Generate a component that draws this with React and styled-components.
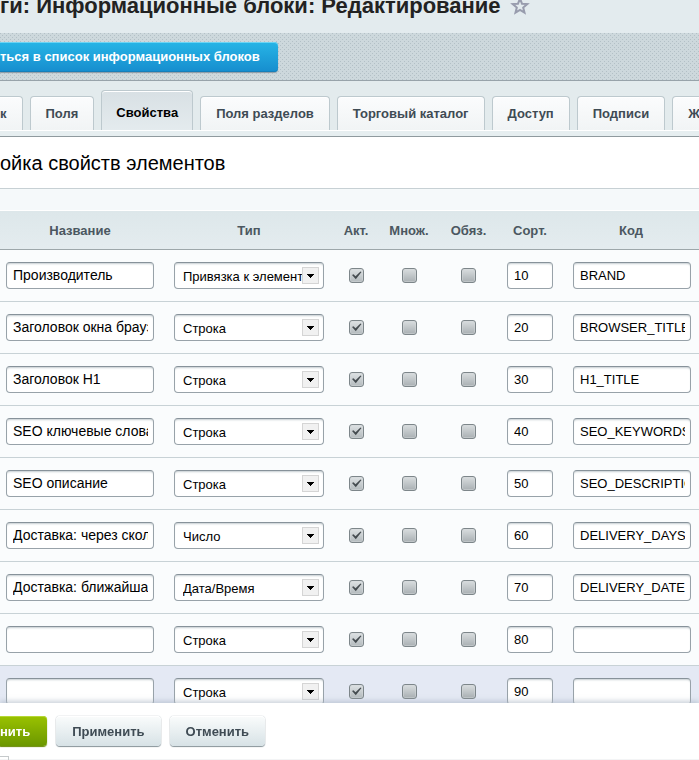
import React from "react";
import styled, { createGlobalStyle, css } from "styled-components";

const Global = createGlobalStyle`
  * { box-sizing: border-box; }
  body { margin: 0; font-family: "Liberation Sans", Arial, sans-serif; font-size: 13px; color: #000; background: #fff; }
  button, input, select { font: inherit; color: inherit; margin: 0; }
`;

const Page = styled.div`
  display: flex;
  flex-direction: column;
  height: 100vh;
  overflow: hidden;
`;

const TitleBar = styled.header`
  display: flex;
  align-items: center;
  gap: 10px;
  padding-bottom: 21px;
  background: #e3ebee;
  white-space: nowrap;
`;

const Title = styled.h1`
  margin: 0;
  font-size: 22px;
  line-height: 12px;
  color: #222;
`;

const StarButton = styled.button`
  display: flex;
  padding: 0;
  border: 0;
  background: none;
  height: 12px;
  align-items: center;
`;

const Toolbar = styled.div`
  display: flex;
  flex: none;
  height: 48px;
  padding-top: 9px;
  border-bottom: 1px solid #98a3aa;
  background-color: #cdd8dc;
  background-image: conic-gradient(from 270deg at 1px 1px, #b3c0c6 90deg, transparent 0),
    conic-gradient(from 270deg at 1px 1px, #b3c0c6 90deg, transparent 0);
  background-size: 4px 4px;
  background-position: 0 0, 2px 2px;
`;

const BackButton = styled.button`
  height: 30px;
  padding: 0 18px 2px 0;
  border: 0;
  border-radius: 0 4px 4px 0;
  background: linear-gradient(#27b5e6, #168dce);
  box-shadow: inset 0 1px #6dd5f5, inset 0 -1px #167fb9, 0 1px 1px #8b9aa3;
  color: #fff;
  font-weight: bold;
  white-space: nowrap;
`;

const Tabs = styled.div`
  display: flex;
  flex: none;
  align-items: flex-end;
  gap: 7px;
  height: 50px;
  overflow: hidden;
  background: #e3ebed;
  border-bottom: 1px solid #fff;
`;

const Tab = styled.button`
  flex: none;
  height: 34px;
  padding: 0 15px;
  border: 1px solid #bdc9ce;
  border-bottom: 0;
  border-radius: 4px 4px 0 0;
  background: linear-gradient(#fbfcfd, #f1f4f5);
  box-shadow: inset 0 1px #fff;
  color: #3f4b54;
  font-weight: bold;
  white-space: nowrap;
  ${(p) => p.$first && css`
    padding-left: 0;
    border-left: 0;
    border-top-left-radius: 0;
  `}
  ${(p) => p.$active && css`
    height: 40px;
    padding: 4px 14px 0;
    background: linear-gradient(#d8e0e4, #e4ebee);
    color: #000;
  `}
`;

const TabsBase = styled.div`
  flex: none;
  height: 6px;
  background: #e6eef0;
  border-bottom: 1px solid #8f9a9e;
`;

const SectionTitle = styled.h2`
  flex: none;
  margin: 0;
  padding: 15px 0 13px;
  border-bottom: 1px solid #c7d0d4;
  background: #fff;
  font-size: 20px;
  font-weight: normal;
  line-height: 23px;
  white-space: nowrap;
`;

const Content = styled.main`
  flex: 1;
  min-height: 0;
  padding-top: 21px;
  overflow: auto;
  scrollbar-width: none;
  background: #f5f9fa;
`;

const Table = styled.table`
  width: 100%;
  table-layout: fixed;
  border-collapse: separate;
  border-spacing: 0;
`;

const Col = styled.col`
  width: ${(p) => (p.$w ? `${p.$w}px` : "auto")};
`;

const HeadCell = styled.th`
  height: 40px;
  padding: 0;
  border-top: 1px solid #fff;
  border-bottom: 1px solid #9da7aa;
  background: linear-gradient(#dde7ea, #e4ecef);
  color: #4b5760;
  text-align: center;
  &:first-child { padding-right: 4px; }
`;

const Row = styled.tr`
  background: ${(p) => (p.$hover ? "#e4e9f4" : "#fafcfd")};
`;

const Cell = styled.td`
  height: 52px;
  padding: 0 ${(p) => p.$pr ?? 10}px 0 ${(p) => p.$pl ?? 10}px;
  border-bottom: 1px solid #c8d2d6;
  text-align: center;
  vertical-align: middle;
`;

const field = css`
  display: block;
  width: 100%;
  height: 27px;
  border: 1px solid #8f9aa1;
  border-color: #87929a #98a2a9 #98a2a9;
  border-radius: 4px;
  background: #fff;
  box-shadow: inset 0 2px 2px -1px #c5cdd1;
`;

const TextField = styled.input`
  ${field}
  padding: 0 5px 1px 6px;
  font-size: ${(p) => (p.$large ? 14 : 13)}px;
`;

const SelectBox = styled.div`
  display: grid;
  align-items: center;
  & > * { grid-area: 1 / 1; }
`;

const Select = styled.select`
  ${field}
  padding: 1px 21px 0 8px;
  appearance: none;
  text-overflow: clip;
`;

const Arrow = styled.svg`
  justify-self: end;
  margin-right: 5px;
  pointer-events: none;
`;

const Check = styled.input`
  display: block;
  width: 15px;
  height: 15px;
  margin: 0 auto;
  appearance: none;
  border: 1px solid #7d868a;
  border-radius: 3px;
  background: linear-gradient(#d9dddf, #a9b0b3);
  box-shadow: inset 0 0 0 1px #d3d8da80;
  &:checked {
    background: url("data:image/svg+xml,%3Csvg xmlns='http://www.w3.org/2000/svg' width='13' height='13'%3E%3Cpath d='M2 6l1.500-.8L5.500 7.300 10.500 2.500 11.500 3 5.800 10.300z' fill='%23454c50'/%3E%3C/svg%3E") center no-repeat,
      linear-gradient(#dee2e4, #b3babd);
  }
`;

const Footer = styled.footer`
  position: relative;
  display: flex;
  flex: none;
  align-items: flex-start;
  gap: 9px;
  height: 57px;
  padding-top: 13px;
  background: #fff;
  border-bottom: 1px solid #f3f4f5;
  box-shadow: 0 -2px 5px #a6b2c099;
`;

const FooterButton = styled.button`
  height: 30px;
  padding: 0 16px;
  border: 0;
  border-radius: 4px;
  background: linear-gradient(#fafcfc, #d7e2e6);
  box-shadow: inset 0 1px #fff, 0 0 1px #778790, 0 1px 1px #8a969c;
  color: #3f4b54;
  font-weight: bold;
  ${(p) => p.$primary && css`
    padding: 0 17px 0 0;
    border-radius: 0 4px 4px 0;
    background: linear-gradient(#9ac200, #6b9700);
    box-shadow: inset 0 1px #b6d835, 0 1px 1px #668800;
    color: #fff;
  `}
`;

const CornerBox = styled.span`
  position: absolute;
  left: 0;
  bottom: -1px;
  width: 9px;
  height: 4px;
  border-top: 1px solid #c5c9cb;
  border-right: 1px solid #c5c9cb;
`;

const tabs = ["к", "Поля", "Свойства", "Поля разделов", "Торговый каталог", "Доступ", "Подписи", "Журнал"];
const columns = ["Название", "Тип", "Акт.", "Множ.", "Обяз.", "Сорт.", "Код"];
const widths = [164, 170, 44, 62, 57, 66, null];
const types = ["Строка", "Число", "Дата/Время", "Привязка к элементам"];

const rows = [
  ["Производитель", "Привязка к элементам", 10, "BRAND"],
  ["Заголовок окна браузера", "Строка", 20, "BROWSER_TITLE"],
  ["Заголовок H1", "Строка", 30, "H1_TITLE"],
  ["SEO ключевые слова", "Строка", 40, "SEO_KEYWORDS"],
  ["SEO описание", "Строка", 50, "SEO_DESCRIPTION"],
  ["Доставка: через сколько", "Число", 60, "DELIVERY_DAYS"],
  ["Доставка: ближайшая", "Дата/Время", 70, "DELIVERY_DATE"],
  ["", "Строка", 80, ""],
  ["", "Строка", 90, ""],
];

function PropertyRow({ row: [name, type, sort, code], hover }) {
  return (
    <Row $hover={hover}>
      <Cell $pl={6}><TextField $large aria-label="Название" defaultValue={name} /></Cell>
      <Cell>
        <SelectBox>
          <Select aria-label="Тип" defaultValue={type}>
            {types.map((t) => <option key={t}>{t}</option>)}
          </Select>
          <Arrow width="17" height="17" viewBox="0 0 17 17" aria-hidden="true">
            <rect x="0.5" y="0.5" width="16" height="16" fill="#f1f1f1" stroke="#d5d5d5" />
            <path d="M5 7h7v1h-1v1h-1v1H9v1H8v-1H7V9H6V8H5z" fill="#000" />
          </Arrow>
        </SelectBox>
      </Cell>
      <Cell $pl={0} $pr={0}><Check type="checkbox" aria-label="Акт." defaultChecked /></Cell>
      <Cell $pl={0} $pr={0}><Check type="checkbox" aria-label="Множ." /></Cell>
      <Cell $pl={0} $pr={0}><Check type="checkbox" aria-label="Обяз." /></Cell>
      <Cell><TextField aria-label="Сорт." defaultValue={sort} /></Cell>
      <Cell $pr={8}><TextField aria-label="Код" defaultValue={code} /></Cell>
    </Row>
  );
}

export default function App() {
  return (
    <>
      <Global />
      <Page>
        <TitleBar>
          <Title>ги: Информационные блоки: Редактирование</Title>
          <StarButton aria-label="Добавить в избранное">
            <svg width="18" height="18" viewBox="0 0 18 18" overflow="visible" aria-hidden="true">
              <path d="M9 1.500l2 5.200 5.300.3-4.100 3.500 1.300 5.200L9 12.900l-4.500 2.800 1.300-5.200L1.700 7l5.300-.3z" fill="none" stroke="#989cad" strokeWidth="2" />
            </svg>
          </StarButton>
        </TitleBar>
        <Toolbar><BackButton>ться в список информационных блоков</BackButton></Toolbar>
        <Tabs role="tablist">
          {tabs.map((t, i) => (
            <Tab key={t} role="tab" aria-selected={i === 2} $first={i === 0} $active={i === 2}>{t}</Tab>
          ))}
        </Tabs>
        <TabsBase />
        <SectionTitle>ойка свойств элементов</SectionTitle>
        <Content>
          <Table>
            <colgroup>{widths.map((w, i) => <Col key={i} $w={w} />)}</colgroup>
            <thead>
              <tr>{columns.map((c) => <HeadCell key={c}>{c}</HeadCell>)}</tr>
            </thead>
            <tbody>
              {rows.map((r, i) => <PropertyRow key={r[2]} row={r} hover={i === 8} />)}
            </tbody>
          </Table>
        </Content>
        <Footer>
          <FooterButton $primary>нить</FooterButton>
          <FooterButton>Применить</FooterButton>
          <FooterButton>Отменить</FooterButton>
          <CornerBox />
        </Footer>
      </Page>
    </>
  );
}
